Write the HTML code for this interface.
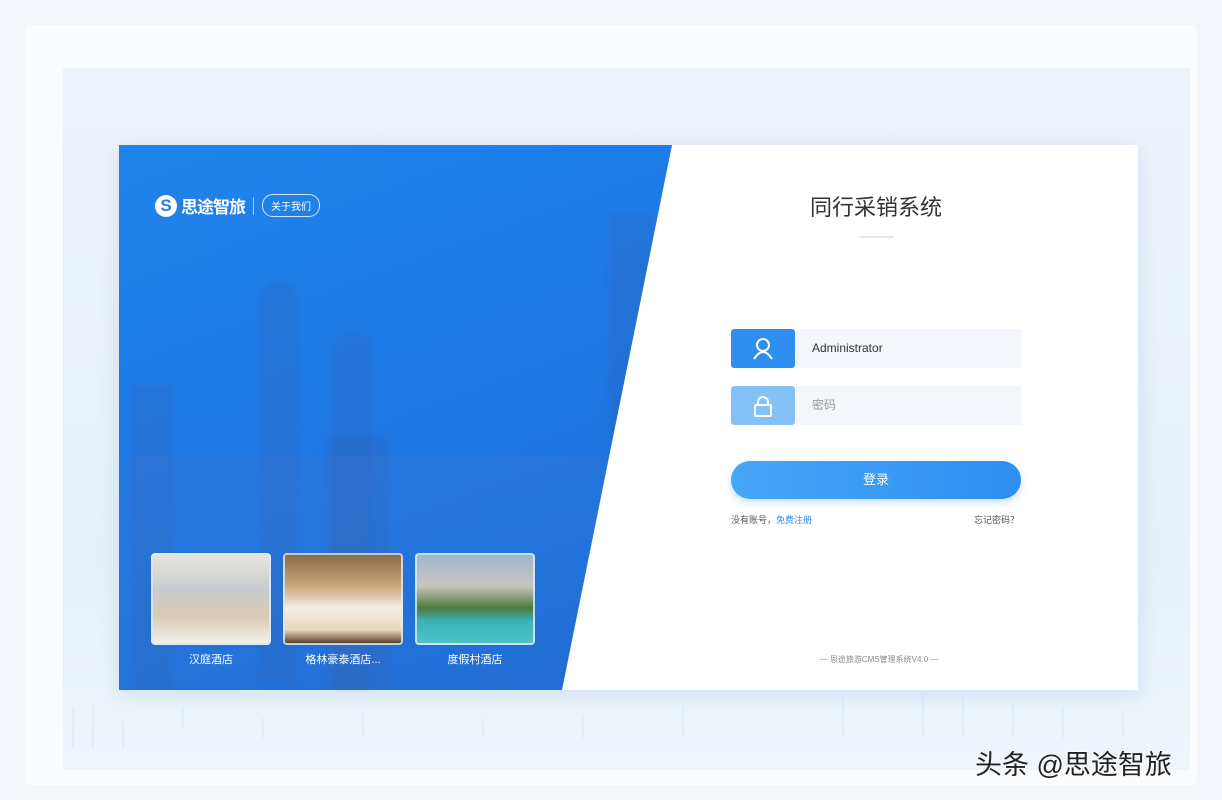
<!DOCTYPE html>
<html><head><meta charset="utf-8"><style>
*{margin:0;padding:0;box-sizing:border-box}
body{width:1222px;height:800px;overflow:hidden;background:#f3f6fa;font-family:"Liberation Sans","Noto Sans CJK SC",sans-serif;position:relative}
.outer{position:absolute;left:25px;top:25px;width:1172px;height:760px;background:#fbfcfe;border-radius:6px}
.inner{position:absolute;left:63px;top:68px;width:1127px;height:702px;background:linear-gradient(#edf3fa,#e7f0f9 70%,#eef5fb)}
.card{position:absolute;left:119px;top:145px;width:1019px;height:545px;background:#fff;box-shadow:0 4px 18px rgba(80,140,210,.18);overflow:hidden}
.blue{position:absolute;left:0;top:0;width:560px;height:545px;background:linear-gradient(160deg,#1f84ea 0%,#1e7ae6 40%,#1a6ad6 100%);clip-path:polygon(0 0,553px 0,443px 545px,0 545px)}
.b{position:absolute;background:rgba(50,95,170,.25);filter:blur(2px)}
.logo{position:absolute;left:36px;top:48px;color:#fff;display:flex;align-items:center}
.logo .s{width:22px;height:22px;border-radius:50%;background:#fff;color:#1f7fe6;font-weight:bold;font-size:17px;text-align:center;line-height:22px}
.logo .t{font-size:17px;font-weight:bold;margin-left:4px;letter-spacing:-1px}
.logo .sep{width:1px;height:18px;background:rgba(255,255,255,.6);margin:0 8px}
.logo .pill{border:1.5px solid rgba(255,255,255,.8);border-radius:11px;font-size:10px;padding:3px 8px}
.ph{position:absolute;top:408px;width:120px;height:92px;border:2px solid rgba(220,235,255,.8);border-radius:4px;overflow:hidden}
.cap{position:absolute;top:506px;width:120px;text-align:center;color:#fff;font-size:11px}
h1{position:absolute;left:622px;width:270px;top:45px;text-align:center;font-size:22px;font-weight:normal;color:#333}
.ul{position:absolute;left:740px;top:91px;width:35px;height:2px;background:#e0e8f2}
.ic{position:absolute;left:612px;width:64px;height:39px;border-radius:3px}
.inp{position:absolute;left:677px;width:225px;height:39px;background:#f3f6fb;font-size:12px;line-height:39px;padding-left:16px}
.btn{position:absolute;left:612px;top:316px;width:290px;height:38px;border-radius:19px;background:linear-gradient(90deg,#47a6f6,#2f8ef0);color:#fff;font-size:13px;text-align:center;line-height:38px;box-shadow:0 3px 8px rgba(60,150,240,.3)}
.sm{position:absolute;top:368px;font-size:9px;color:#555}
.foot{position:absolute;left:680px;top:509px;width:160px;text-align:center;font-size:8px;color:#888}
.wm{position:absolute;left:975px;top:743px;font-size:27px;color:#222;text-shadow:0 0 2px #fff,0 0 2px #fff}
</style></head><body>
<div class="outer"></div>
<div class="inner">
<svg width="1127" height="702" style="position:absolute;left:0;top:0">
<g stroke="#a9d2ef" stroke-width="1" opacity=".35">
<path d="M10 640 v40 M30 635 v45 M60 650 v30 M120 640 v20 M200 650 v20 M300 645 v25 M420 650 v20 M520 648 v22 M620 640 v30 M780 630 v40 M860 625 v45 M900 630 v40 M950 635 v35 M1000 640 v30 M1060 645 v25"/>
</g></svg>
</div>
<div class="card">
<div class="blue">
<div class="b" style="left:140px;top:138px;width:38px;height:400px;border-radius:18px 18px 0 0"></div>
<div class="b" style="left:214px;top:187px;width:38px;height:360px;border-radius:18px 18px 0 0"></div>
<div class="b" style="left:12px;top:240px;width:42px;height:310px"></div>
<div class="b" style="left:208px;top:290px;width:62px;height:260px"></div>
<div class="b" style="left:490px;top:70px;width:45px;height:470px"></div>
<div class="b" style="left:0;top:310px;width:560px;height:240px;background:rgba(80,130,200,.15);filter:none"></div>
<div class="logo"><div class="s">S</div><div class="t">思途智旅</div><div class="sep"></div><div class="pill">关于我们</div></div>
<div class="ph" style="left:32px;background:linear-gradient(180deg,#e8e4dc 0%,#c7cbcf 40%,#d9cbb5 70%,#f2f0ea 100%)"></div>
<div class="ph" style="left:164px;background:linear-gradient(180deg,#8a6c4c 0%,#c9a57a 35%,#f2eee6 60%,#e8d8b8 85%,#5a4030 100%)"></div>
<div class="ph" style="left:296px;background:linear-gradient(180deg,#9fb7cf 0%,#c8c6bc 35%,#4d7a3c 60%,#39b2b8 75%,#4fc3c6 100%)"></div>
<div class="cap" style="left:32px">汉庭酒店</div>
<div class="cap" style="left:164px">格林豪泰酒店...</div>
<div class="cap" style="left:296px">度假村酒店</div>
</div>
<h1>同行采销系统</h1>
<div class="ul"></div>
<div class="ic" style="top:184px;background:#2e8ff0">
<svg width="64" height="39"><circle cx="32" cy="16" r="6" fill="none" stroke="#fff" stroke-width="2"/><path d="M23 30 q9-14 18 0" fill="none" stroke="#fff" stroke-width="2"/></svg></div>
<div class="inp" style="top:184px;color:#333">Administrator</div>
<div class="ic" style="top:241px;background:#84c1f6">
<svg width="64" height="39"><path d="M27 19 v-3 a5 5 0 0 1 10 0 v3" fill="none" stroke="#fff" stroke-width="2"/><rect x="24" y="19" width="16" height="11" rx="1" fill="none" stroke="#fff" stroke-width="2"/></svg></div>
<div class="inp" style="top:241px;color:#999">密码</div>
<div class="btn">登录</div>
<div class="sm" style="left:612px">没有账号，<span style="color:#2f8ef0">免费注册</span></div>
<div class="sm" style="left:855px">忘记密码？</div>
<div class="foot">— 思途旅游CMS管理系统V4.0 —</div>
</div>
<div class="wm">头条 @思途智旅</div>
</body></html>
